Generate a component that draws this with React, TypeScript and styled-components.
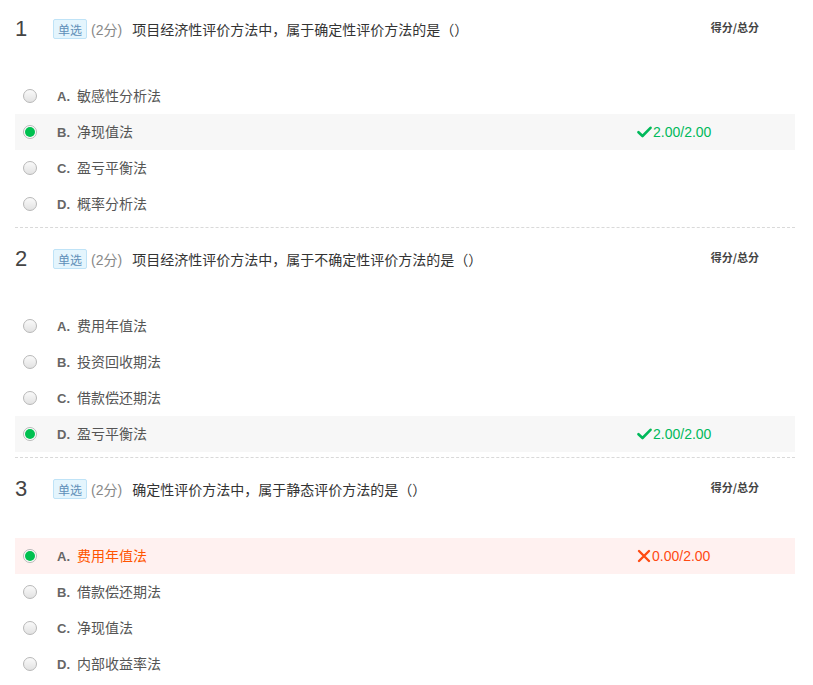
import React from "react";
import styled, { createGlobalStyle } from "styled-components";

const Global = createGlobalStyle`
  html, body { margin: 0; padding: 0; background: #fff; }
  body { font-family: "Liberation Sans", Arial, "Noto Sans CJK SC", sans-serif; }
`;

const Page = styled.div`
  padding: 0 18px 0 15px;
`;

const Question = styled.section<{ $first?: boolean }>`
  padding-top: ${(p) => (p.$first ? 10 : 12)}px;
  padding-bottom: 5px;
  border-bottom: 1px dashed #d9d9d9;
  &:last-child { border-bottom: none; }
`;

const Header = styled.div`
  display: flex;
  align-items: center;
  height: 38px;
  margin-bottom: 30px;
`;

const Num = styled.span`
  width: 38px;
  font-size: 22px;
  color: #444;
  font-family: "Liberation Sans", Arial, sans-serif;
`;

const Tag = styled.span`
  display: inline-flex;
  align-items: center;
  height: 18px;
  padding: 0 4px;
  border: 1px solid #bfe3f7;
  background: #e4f5fd;
  color: #5f8fb8;
  font-size: 12px;
  border-radius: 2px;
  font-family: "Noto Sans CJK SC", sans-serif;
  margin-right: 4px;
`;

const Points = styled.span`
  color: #888;
  font-size: 14px;
  font-family: "Liberation Sans", "Noto Sans CJK SC", sans-serif;
  margin-right: 10px;
`;

const Title = styled.span`
  color: #333;
  font-size: 14px;
  font-family: "Noto Sans CJK SC", sans-serif;
`;

const ScoreLabel = styled.span`
  margin-left: auto;
  margin-right: 36px;
  font-size: 11px;
  font-weight: bold;
  color: #444;
  font-family: "Noto Sans CJK SC", sans-serif;
  position: relative;
  top: -2px;
`;

const Row = styled.div<{ $state?: "right" | "wrong" }>`
  display: flex;
  align-items: center;
  height: 36px;
  padding-left: 8px;
  background: ${(p) =>
    p.$state === "right" ? "#f7f7f7" : p.$state === "wrong" ? "#fff1f0" : "transparent"};
`;

const Radio = styled.span<{ $checked?: boolean }>`
  width: 12px;
  height: 12px;
  border-radius: 50%;
  border: 1px solid #b8b8b8;
  background: linear-gradient(#fafafa, #e2e2e2);
  box-sizing: content-box;
  position: relative;
  flex: none;
  ${(p) =>
    p.$checked &&
    `
    background: #fff;
    &::after {
      content: "";
      position: absolute;
      left: 1px; top: 1px;
      width: 10px; height: 10px;
      border-radius: 50%;
      background: #00c050;
    }
  `}
`;

const Letter = styled.span`
  margin-left: 20px;
  width: 20px;
  font-size: 13px;
  font-weight: bold;
  color: #666;
  font-family: "Liberation Sans", Arial, sans-serif;
`;

const OptText = styled.span<{ $wrong?: boolean }>`
  font-size: 14px;
  color: ${(p) => (p.$wrong ? "#ff5500" : "#555")};
  font-family: "Noto Sans CJK SC", sans-serif;
  position: relative;
  top: -1px;
`;

const Score = styled.span<{ $wrong?: boolean }>`
  margin-left: auto;
  width: 158px;
  display: flex;
  align-items: center;
  font-size: 14px;
  color: ${(p) => (p.$wrong ? "#ff4a12" : "#00b95b")};
  font-family: "Liberation Sans", Arial, sans-serif;
`;

type Opt = { k: string; t: string };
type Q = {
  n: number;
  title: string;
  options: Opt[];
  chosen: number;
  correct: boolean;
  score: string;
};

const data: Q[] = [
  {
    n: 1,
    title: "项目经济性评价方法中，属于确定性评价方法的是（）",
    options: [
      { k: "A.", t: "敏感性分析法" },
      { k: "B.", t: "净现值法" },
      { k: "C.", t: "盈亏平衡法" },
      { k: "D.", t: "概率分析法" },
    ],
    chosen: 1,
    correct: true,
    score: "2.00/2.00",
  },
  {
    n: 2,
    title: "项目经济性评价方法中，属于不确定性评价方法的是（）",
    options: [
      { k: "A.", t: "费用年值法" },
      { k: "B.", t: "投资回收期法" },
      { k: "C.", t: "借款偿还期法" },
      { k: "D.", t: "盈亏平衡法" },
    ],
    chosen: 3,
    correct: true,
    score: "2.00/2.00",
  },
  {
    n: 3,
    title: "确定性评价方法中，属于静态评价方法的是（）",
    options: [
      { k: "A.", t: "费用年值法" },
      { k: "B.", t: "借款偿还期法" },
      { k: "C.", t: "净现值法" },
      { k: "D.", t: "内部收益率法" },
    ],
    chosen: 0,
    correct: false,
    score: "0.00/2.00",
  },
];

const Check = () => (
  <svg width="15" height="12" viewBox="0 0 15 12" style={{ marginRight: 1 }}>
    <path d="M1.5 6.2 L5.5 10 L13.5 1.8" fill="none" stroke="#00b95b" strokeWidth="2.6" strokeLinecap="round" strokeLinejoin="round" />
  </svg>
);

const Cross = () => (
  <svg width="14" height="14" viewBox="0 0 14 14" style={{ marginRight: 1 }}>
    <path d="M2 2 L12 12 M12 2 L2 12" fill="none" stroke="#ff4a12" strokeWidth="2.4" strokeLinecap="round" />
  </svg>
);

export default function App() {
  return (
    <Page>
      <Global />
      {data.map((q, qi) => (
        <Question key={q.n} $first={qi === 0}>
          <Header>
            <Num>{q.n}</Num>
            <Tag>单选</Tag>
            <Points>(2分)</Points>
            <Title>{q.title}</Title>
            <ScoreLabel>得分/总分</ScoreLabel>
          </Header>
          {q.options.map((o, i) => {
            const sel = i === q.chosen;
            const state = sel ? (q.correct ? "right" : "wrong") : undefined;
            return (
              <Row key={o.k} $state={state}>
                <Radio $checked={sel} />
                <Letter>{o.k}</Letter>
                <OptText $wrong={state === "wrong"}>{o.t}</OptText>
                {sel && (
                  <Score $wrong={!q.correct}>
                    {q.correct ? <Check /> : <Cross />}
                    {q.score}
                  </Score>
                )}
              </Row>
            );
          })}
        </Question>
      ))}
    </Page>
  );
}
